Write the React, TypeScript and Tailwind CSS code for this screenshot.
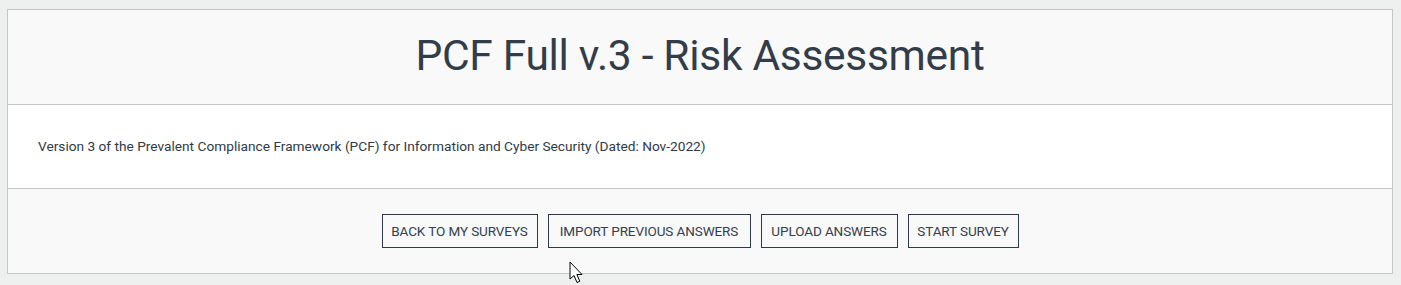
import React from "react";

const buttons = [
  { label: "BACK TO MY SURVEYS", width: "w-[156px]" },
  { label: "IMPORT PREVIOUS ANSWERS", width: "w-[203px]" },
  { label: "UPLOAD ANSWERS", width: "w-[137px]" },
  { label: "START SURVEY", width: "w-[111px]" },
];

function Cursor() {
  return (
    <svg
      className="absolute left-[569px] top-[261px] pointer-events-none"
      width="20"
      height="26"
      viewBox="0 0 20 26"
    >
      <path
        d="M1 1 L1 18 L5 14.5 L8 21.5 L10.8 20.3 L7.9 13.5 L13 13.5 Z"
        fill="#ffffff"
        stroke="#000000"
        strokeWidth="1"
        strokeLinejoin="miter"
      />
    </svg>
  );
}

export default function App() {
  return (
    <div className="relative w-[1401px] h-[285px] bg-[#eef0ef] pt-[9px] pl-[7px] pr-[8px] font-['Roboto',sans-serif] text-[#2f3b48]">
      <div className="border border-[#c6c6c6] bg-[#f9f9f9]">
        <div className="h-[95px] flex items-center justify-center border-b border-[#c6c6c6]">
          <h1 className="text-[42.5px] leading-none tracking-[-0.3px] text-[#333d49] pb-[2px]">
            PCF Full v.3 - Risk Assessment
          </h1>
        </div>
        <div className="h-[84px] bg-white flex items-center px-[30px] border-b border-[#c6c6c6]">
          <p className="text-[13.7px] text-[#2f3a46] pb-[1px]">
            Version 3 of the Prevalent Compliance Framework (PCF) for Information and Cyber Security
            (Dated: Nov-2022)
          </p>
        </div>
        <div className="h-[84px] flex items-start justify-center gap-[10px] pt-[25px]">
          {buttons.map((b) => (
            <button
              key={b.label}
              type="button"
              className={`${b.width} h-[34px] border border-[#2c3a4b] bg-transparent text-[13.5px] text-[#34404d] tracking-[-0.1px]`}
            >
              {b.label}
            </button>
          ))}
        </div>
      </div>
      <Cursor />
    </div>
  );
}
